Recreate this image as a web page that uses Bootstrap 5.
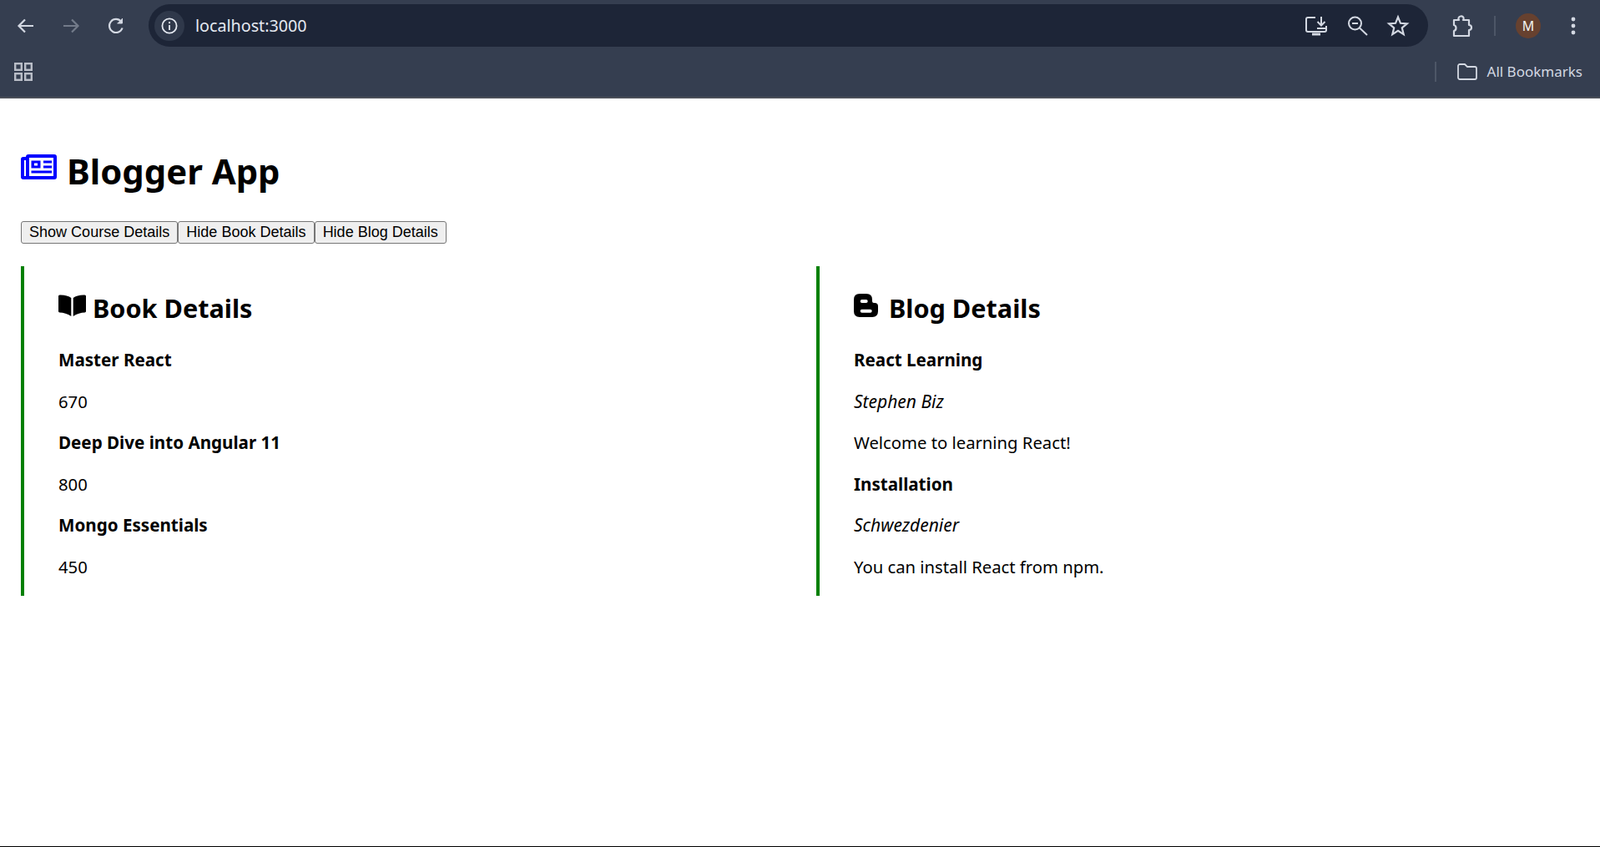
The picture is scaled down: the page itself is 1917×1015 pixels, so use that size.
<!DOCTYPE html>
<html lang="en">
<head>
  <meta charset="UTF-8" />
  <meta name="viewport" content="width=device-width, initial-scale=1.0"/>
  <title>Blogger App</title>
  <link href="https://cdn.jsdelivr.net/npm/bootstrap@5.3.0/dist/css/bootstrap.min.css" rel="stylesheet" />
  <style>
    html, body { height: 100%; overflow: hidden; }
    body { background: #fff; color: #000; font-family: "Noto Sans", "Open Sans", sans-serif; }
    .page-wrap { height: 1015px; border-bottom: 1px solid #000; }

    /* browser chrome */
    .chrome { height: 118px; background: #353e50; border-bottom: 2px solid #4b4f59; }
    .chrome-top { height: 61px; padding: 5px 0 5px 14px; }
    .chrome-btn { width: 34px; height: 34px; margin-right: 20px; }
    .omnibox { width: 1533px; height: 51px; margin-left: 2px; padding-left: 7px; border-radius: 26px; background: #1d2537; }
    .site-chip { width: 36px; height: 36px; border-radius: 50%; background: #2f384a; }
    .omni-url { margin-left: 13px; font-size: 19.7px; color: #e4e8f0; }
    .omni-icon { width: 30px; height: 30px; margin-left: 19px; }
    .omni-icon:first-of-type { margin-left: 0; }
    .omni-end { margin-right: 21px; }
    .puzzle { margin-left: 27px; }
    .chrome-sep { width: 2px; height: 24px; background: #4d5667; margin-left: 22px; }
    .avatar { width: 30px; height: 30px; margin-left: 24px; border-radius: 50%; background: #67412f; color: #f2f2f2; font-size: 16px; }
    .kebab { margin-left: 36px; }
    .chrome-bottom { height: 55px; padding: 0 21px 5px 17px; }
    .bm-sep { width: 2px; height: 24px; background: #4d5667; margin-right: 25px; }
    .bm-label { margin-left: 12px; font-size: 17px; color: #d3d8e2; }

    /* page */
    .app-body { padding: 57px 0 0 25px; }
    .app-title { font-size: 41.8px; font-weight: 700; line-height: 60px; margin: 0 0 30px; }
    .app-title svg { margin-right: 12px; vertical-align: 6px; }
    .btn-row { margin-bottom: 27px; }
    .plain-btn { height: 27px; padding: 0 9.1px 1px; font-family: "Liberation Sans", Arial, sans-serif; font-size: 18px; line-height: 24px; color: #000; background: #efefef; border: 1.5px solid #767676; border-radius: 3px; }
    .detail-col { flex: 0 0 953px; height: 395px; padding: 0 0 0 41px; border-left: 4px solid #008000; }
    .detail-head { font-size: 30.6px; font-weight: 700; line-height: 44px; margin: 28px 0 25px; }
    .book-icon { margin-right: 8px; vertical-align: 2px; }
    .blog-icon { margin-right: 13px; vertical-align: 1px; }
    .detail-text { font-size: 20.25px; line-height: 30px; margin: 0 0 19.5px; }
    .detail-title { font-size: 20.6px; font-weight: 700; }
    .detail-author { font-size: 21px; font-style: italic; }
  </style>
</head>
<body>
  <div class="page-wrap">
    <header class="chrome">
      <div class="chrome-top d-flex align-items-center">
        <svg class="chrome-btn" viewBox="0 0 34 34" fill="none" stroke="#d3d8e2" stroke-width="2.2"><path d="M26 17H9M16 9.5 8.5 17l7.5 7.5"/></svg>
        <svg class="chrome-btn" viewBox="0 0 34 34" fill="none" stroke="#737b8a" stroke-width="2.2"><path d="M8 17h17M18 9.5l7.5 7.5-7.5 7.5"/></svg>
        <svg class="chrome-btn" viewBox="0 0 34 34" fill="none" stroke="#d3d8e2" stroke-width="2.2"><path d="M24.6 19.5a8 8 0 1 1-1.4-7.6"/><path d="M24.5 8v6h-6" fill="#d3d8e2" stroke-width="1"/></svg>
        <div class="omnibox d-flex align-items-center">
          <div class="site-chip d-flex align-items-center justify-content-center">
            <svg width="20" height="20" viewBox="0 0 20 20" fill="none" stroke="#e4e8f0" stroke-width="1.8"><circle cx="10" cy="10" r="8.6"/><path d="M10 9v6M10 5v2.2"/></svg>
          </div>
          <span class="omni-url">localhost:3000</span>
          <div class="ms-auto omni-end d-flex align-items-center">
            <svg class="omni-icon" viewBox="0 0 30 30" fill="none" stroke="#d3d8e2" stroke-width="2"><path d="M14 5H5a2 2 0 0 0-2 2v13a2 2 0 0 0 2 2h20a2 2 0 0 0 2-2v-5"/><path d="M10 25h10" stroke-width="3"/><path d="M21 4v10M16.500 10l4.500 4.500 4.500-4.500M16 18h10"/></svg>
            <svg class="omni-icon" viewBox="0 0 30 30" fill="none" stroke="#d3d8e2" stroke-width="2"><circle cx="12.500" cy="12" r="7.500"/><path d="M18 17.500 27 26"/><path d="M9 12h7"/></svg>
            <svg class="omni-icon" viewBox="0 0 30 30" fill="none" stroke="#d3d8e2" stroke-width="2.200"><path d="m15 4.500 3 7.300 7.800.6-6 5.100 1.900 7.600L15 20.900l-6.700 4.200 1.900-7.600-6-5.100 7.800-.6z"/></svg>
          </div>
        </div>
        <svg class="omni-icon puzzle" viewBox="0 0 30 30" fill="none" stroke="#d3d8e2" stroke-width="2.200" stroke-linejoin="round"><path d="M4 8h6a2.800 2.800 0 0 1 2-4.500A2.800 2.800 0 0 1 15 8h7v6a2.800 2.800 0 0 1 0 6v7H4v-6a3.500 3.500 0 0 0 2.500-3.500A3.500 3.500 0 0 0 4 14z"/></svg>
        <div class="chrome-sep"></div>
        <div class="avatar d-flex align-items-center justify-content-center">M</div>
        <svg class="kebab" width="6" height="22" viewBox="0 0 6 22" fill="#d3d8e2"><circle cx="3" cy="3" r="2.400"/><circle cx="3" cy="11" r="2.400"/><circle cx="3" cy="19" r="2.400"/></svg>
      </div>
      <div class="chrome-bottom d-flex align-items-center">
        <svg width="22" height="22" viewBox="0 0 22 22" fill="none" stroke="#b9bdc7" stroke-width="2.400"><rect x="1.200" y="1.200" width="7.600" height="7.600"/><rect x="13.200" y="1.200" width="7.600" height="7.600"/><rect x="1.200" y="13.200" width="7.600" height="7.600"/><rect x="13.200" y="13.200" width="7.600" height="7.600"/></svg>
        <div class="bm-sep ms-auto"></div>
        <svg width="24" height="20" viewBox="0 0 24 20" fill="none" stroke="#d3d8e2" stroke-width="1.800"><path d="M1 3a2 2 0 0 1 2-2h6l3 3h9a2 2 0 0 1 2 2v11a2 2 0 0 1-2 2H3a2 2 0 0 1-2-2z"/></svg>
        <span class="bm-label">All Bookmarks</span>
      </div>
    </header>

    <main class="app-body">
      <h1 class="app-title">
        <svg width="43" height="30" viewBox="0 0 43 30" fill="#00f"><path fill-rule="evenodd" d="M9 0h31a3 3 0 0 1 3 3v24a3 3 0 0 1-3 3H3a3 3 0 0 1-3-3V6a3 3 0 0 1 3-3h3a3 3 0 0 1 3-3zm1 4v22h29V4zM4 7v19h2V7z"/><path fill-rule="evenodd" d="M12.500 7.500h11v9h-11zm3.500 3v3h4v-3z"/><path d="M27 7.500h10v3h-10zM27 13.500h10v3h-10zM12.500 19.500H37v3H12.500z"/></svg>Blogger App
      </h1>
      <div class="btn-row d-flex">
        <button type="button" class="plain-btn">Show Course Details</button>
        <button type="button" class="plain-btn">Hide Book Details</button>
        <button type="button" class="plain-btn">Hide Blog Details</button>
      </div>
      <div class="d-flex">
        <section class="detail-col">
          <h2 class="detail-head">
            <svg class="book-icon" width="33" height="26" viewBox="0 0 33 26" fill="#000"><path d="M15.300 4C12.500 2 7 .3 1.500.6.500.7 0 1.300 0 2.200v17.900c0 .9.600 1.400 1.500 1.500 4.500.2 9.500 1.400 13.800 4.400zM17.700 4c2.800-2 8.300-3.700 13.800-3.400 1 .1 1.500.7 1.500 1.600v17.900c0 .9-.6 1.400-1.500 1.500-4.500.2-9.500 1.400-13.800 4.400z"/></svg>Book Details
          </h2>
          <p class="detail-text detail-title">Master React</p>
          <p class="detail-text">670</p>
          <p class="detail-text detail-title">Deep Dive into Angular 11</p>
          <p class="detail-text">800</p>
          <p class="detail-text detail-title">Mongo Essentials</p>
          <p class="detail-text">450</p>
        </section>
        <section class="detail-col">
          <h2 class="detail-head">
            <svg class="blog-icon" width="29" height="28" viewBox="0 0 29 28" fill="#000"><path fill-rule="evenodd" d="M7 0h8q7 0 7 7v2q0 2 2 2h1q4 0 4 4v6q0 7-7 7H7q-7 0-7-7V7q0-7 7-7zm2.700 7a2 2 0 0 0 0 4h5a2 2 0 0 0 0-4zm0 11.700a2 2 0 0 0 0 4h10a2 2 0 0 0 0-4z"/></svg>Blog Details
          </h2>
          <p class="detail-text detail-title">React Learning</p>
          <p class="detail-text detail-author">Stephen Biz</p>
          <p class="detail-text">Welcome to learning React!</p>
          <p class="detail-text detail-title">Installation</p>
          <p class="detail-text detail-author">Schwezdenier</p>
          <p class="detail-text">You can install React from npm.</p>
        </section>
      </div>
    </main>
  </div>
  <script src="https://cdn.jsdelivr.net/npm/bootstrap@5.3.0/dist/js/bootstrap.bundle.min.js"></script>
</body>
</html>
